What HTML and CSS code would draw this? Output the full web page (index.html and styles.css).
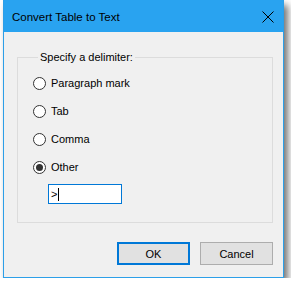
FILE: index.html
```html
<!DOCTYPE html>
<html lang="en">
<head>
  <meta charset="UTF-8" />
  <title>Convert Table to Text</title>
  <link rel="stylesheet" href="styles.css">
</head>
<body>

  <div class="dialog">
    <div class="titlebar">
      <span class="title">Convert Table to Text</span>
      <svg class="close" width="12" height="12" viewBox="0 0 12 12">
        <path d="M0.5 0.5 L11.5 11.5 M11.5 0.5 L0.5 11.5" stroke="#000" stroke-width="1"/>
      </svg>
    </div>

    <div class="content">
      <fieldset class="group">
        <legend>Specify a delimiter:</legend>

        <div class="option">
          <span class="radio"></span>
          <span class="label">Paragraph mark</span>
        </div>
        <div class="option">
          <span class="radio"></span>
          <span class="label">Tab</span>
        </div>
        <div class="option">
          <span class="radio"></span>
          <span class="label">Comma</span>
        </div>
        <div class="option">
          <span class="radio checked"></span>
          <span class="label">Other</span>
        </div>

        <div class="textbox">
          <span>&gt;</span><span class="caret"></span>
        </div>
      </fieldset>

      <div class="buttons">
        <button class="btn default">OK</button>
        <button class="btn">Cancel</button>
      </div>
    </div>
  </div>

</body>
</html>
```

FILE: styles.css
```css
* {
  box-sizing: border-box;
}

body {
  margin: 0;
  background-color: #ffffff;
  font-family: "Liberation Sans", Arial, sans-serif;
  font-size: 11px;
  color: #000;
}

/* fenetre principale */
.dialog {
  width: 281px;
  height: 278px;
  margin-left: 3px;
  border: 1px solid #2c9fe8;
  border-top: none;
  background-color: #f0f0f0;
  box-shadow: 4px 5px 7px rgba(0, 0, 0, 0.55);
  display: flex;
  flex-direction: column;
}

.titlebar {
  height: 32px;
  background-color: #29a3f0;
  display: flex;
  align-items: center;
  justify-content: space-between;
  padding: 0 8px 0 8px;
}

.title {
  font-size: 11.5px;
  margin-top: 1px;
}

.close {
  margin-right: 1px;
  margin-top: 1px;
}

.content {
  flex: 1;
  padding: 19px 10px 0 13px;
}

.group {
  margin: 0;
  padding: 6px 0 0 15px;
  height: 172px;
  border: 1px solid #dcdcdc;
}

.group legend {
  padding: 0 2px;
  margin-left: 5px;
  font-size: 11px;
}

.option {
  display: flex;
  align-items: center;
  height: 28px;
}

.radio {
  width: 13px;
  height: 13px;
  border: 1px solid #333;
  border-radius: 50%;
  background: #fff;
  margin-right: 5px;
  display: flex;
  align-items: center;
  justify-content: center;
}

.radio.checked::after {
  content: '';
  width: 7px;
  height: 7px;
  border-radius: 50%;
  background: #333;
}

.textbox {
  width: 74px;
  height: 20px;
  margin: 3px 0 0 15px;
  border: 1px solid #0078d7;
  background: #fff;
  display: flex;
  align-items: center;
  padding-left: 2px;
}

.caret {
  width: 1px;
  height: 13px;
  background: #000;
  margin-left: 1px;
}

.buttons {
  display: flex;
  justify-content: flex-end;
  gap: 10px;
  margin-top: 19px;
}

.btn {
  width: 73px;
  height: 23px;
  font-family: "Liberation Sans", Arial, sans-serif;
  font-size: 11px;
  background: #e1e1e1;
  border: 1px solid #adadad;
  padding: 0;
  color: #000;
}

.btn.default {
  border: 2px solid #0078d7;
}
```
